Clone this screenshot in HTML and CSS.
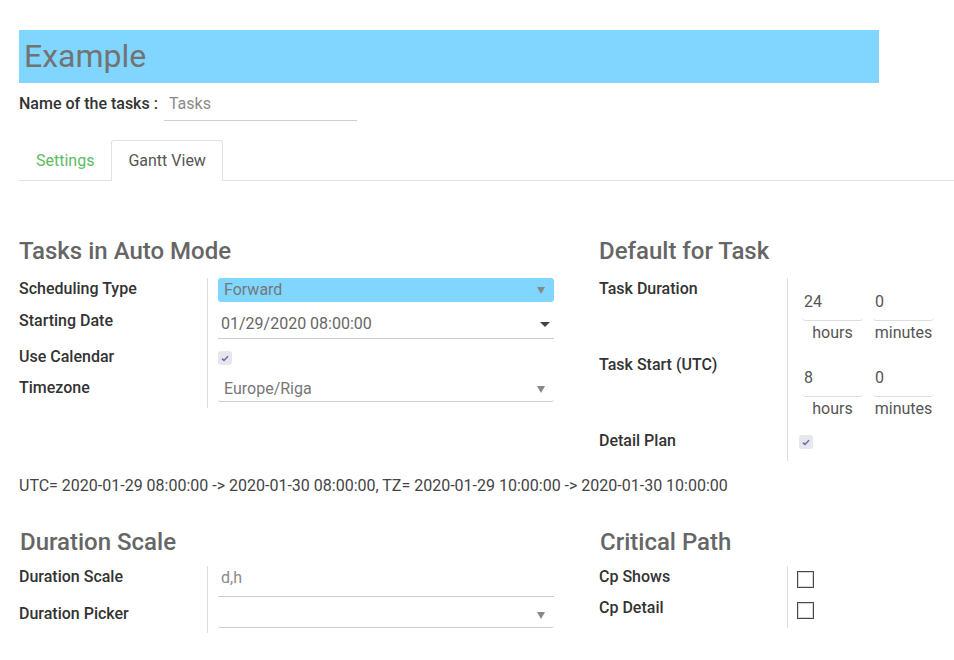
FILE: index.html
```html
<!DOCTYPE html>
<html>
<head>
<meta charset="utf-8">
<link rel="stylesheet" href="styles.css">
</head>
<body>
<div class="sheet">
  <div class="title-bar">Example</div>
  <div class="name-row">
    <span class="name-label">Name of the tasks :</span>
    <span class="name-input">Tasks</span>
  </div>
  <div class="tabs">
    <span class="tab">Settings</span>
    <span class="tab active">Gantt View</span>
  </div>

  <div class="groups g1">
    <div class="col">
      <h2>Tasks in Auto Mode</h2>
      <div class="fields">
        <div class="row r1"><div class="lbl">Scheduling Type</div><div class="val"><div class="select hl">Forward<i class="tri"></i></div></div></div>
        <div class="row r2"><div class="lbl">Starting Date</div><div class="val"><div class="date">01/29/2020 08:00:00<i class="caret"></i></div></div></div>
        <div class="row r3"><div class="lbl">Use Calendar</div><div class="val"><span class="chk on"><svg width="8" height="7" viewBox="0 0 8 7"><path d="M1 3.6 L3 5.4 L7 1.2" fill="none" stroke="#6f6aa8" stroke-width="1.5"/></svg></span></div></div>
        <div class="row r4"><div class="lbl">Timezone</div><div class="val"><div class="select line">Europe/Riga<i class="tri"></i></div></div></div>
      </div>
    </div>
    <div class="col">
      <h2>Default for Task</h2>
      <div class="fields right">
        <div class="row t1"><div class="lbl">Task Duration</div><div class="val"><div class="nums"><div class="num"><div class="box">24</div><div class="unit">hours</div></div><div class="num"><div class="box">0</div><div class="unit">minutes</div></div></div></div></div>
        <div class="row t1"><div class="lbl">Task Start (UTC)</div><div class="val"><div class="nums"><div class="num"><div class="box">8</div><div class="unit">hours</div></div><div class="num"><div class="box">0</div><div class="unit">minutes</div></div></div></div></div>
        <div class="row t3"><div class="lbl">Detail Plan</div><div class="val"><span class="chk on dp"><svg width="8" height="7" viewBox="0 0 8 7"><path d="M1 3.6 L3 5.4 L7 1.2" fill="none" stroke="#6f6aa8" stroke-width="1.5"/></svg></span></div></div>
      </div>
    </div>
  </div>

  <div class="utc">UTC= 2020-01-29 08:00:00 -&gt; 2020-01-30 08:00:00, TZ= 2020-01-29 10:00:00 -&gt; 2020-01-30 10:00:00</div>

  <div class="groups g2">
    <div class="col">
      <h2>Duration Scale</h2>
      <div class="fields">
        <div class="row d1"><div class="lbl">Duration Scale</div><div class="val"><div class="text-in">d,h</div></div></div>
        <div class="row d2"><div class="lbl">Duration Picker</div><div class="val"><div class="select line pick"><i class="tri"></i></div></div></div>
      </div>
    </div>
    <div class="col">
      <h2>Critical Path</h2>
      <div class="fields right">
        <div class="row c1"><div class="lbl">Cp Shows</div><div class="val"><span class="box-chk"></span></div></div>
        <div class="row c1"><div class="lbl">Cp Detail</div><div class="val"><span class="box-chk"></span></div></div>
      </div>
    </div>
  </div>
</div>
</body>
</html>
```

FILE: styles.css
```css
* { box-sizing: border-box; }
html, body { margin: 0; padding: 0; background: #fff; }
body {
  font-family: Roboto, "Liberation Sans", sans-serif;
  font-size: 16px;
  color: #444;
}
.sheet { padding: 30px 0 0 19px; }
.title-bar {
  width: 860px;
  height: 53px;
  background: #80d6ff;
  color: #737373;
  font-size: 32px;
  line-height: 53px;
  padding-left: 5px;
}
.name-row {
  margin-top: 10px;
  display: flex;
  align-items: flex-start;
  height: 28px;
}
.name-label { font-weight: 500; color: #333; line-height: 22px; }
.name-input {
  margin-left: 6px;
  width: 193px;
  height: 28px;
  line-height: 22px;
  padding-left: 5px;
  color: #8a8a8a;
  border-bottom: 1px solid #cfcfcf;
}
.tabs {
  margin-top: 19px;
  display: flex;
  border-bottom: 1px solid #dee2e6;
  height: 41px;
}
.tab {
  height: 41px;
  padding: 0 16px;
  line-height: 40px;
  color: #5dbb63;
  border: 1px solid transparent;
  border-bottom: none;
}
.tab.active {
  color: #555;
  border-color: #dee2e6;
  border-radius: 3px 3px 0 0;
  background: #fff;
  height: 41px;
  margin-bottom: -1px;
}
.groups {
  display: grid;
  grid-template-columns: 535px 1fr;
  column-gap: 45px;
}
.g1 { margin-top: 54px; }
.g2 { margin-top: 30px; }
h2 {
  margin: 0;
  font-size: 24px;
  font-weight: 500;
  color: #666;
  line-height: 30px;
}
.g1 h2 { margin-bottom: 12px; padding-top: 1px; }
.g2 h2 { margin-bottom: 9px; padding-left: 1px; }
.fields .row { display: flex; }
.lbl {
  width: 189px;
  flex: none;
  border-right: 1px solid #ddd;
  font-weight: 500;
  color: #333;
  line-height: 22px;
}
.val { flex: 1; padding-left: 10px; min-width: 0; }
.right .val { padding-left: 9px; }
.r1 { height: 32px; }
.r2 { height: 36px; }
.r3 { height: 31px; }
.r4 { height: 31px; }
.select {
  position: relative;
  height: 24px;
  line-height: 24px;
  padding-left: 6px;
  color: #777;
  width: 336px;
}
.select.hl { background: #80d6ff; border-radius: 3px; }
.select.line { border-bottom: 1px solid #ccc; border-radius: 0 0 3px 3px; height: 25px; }
.tri {
  position: absolute;
  right: 9px;
  top: 9px;
  width: 0; height: 0;
  border-left: 4px solid transparent;
  border-right: 4px solid transparent;
  border-top: 7px solid #888;
}
.date {
  position: relative;
  width: 336px;
  height: 29px;
  line-height: 27px;
  padding-left: 3px;
  color: #666;
  border-bottom: 1px solid #ccc;
}
.caret {
  position: absolute;
  right: 4px;
  top: 12px;
  width: 0; height: 0;
  border-left: 5px solid transparent;
  border-right: 5px solid transparent;
  border-top: 5px solid #444;
}
.chk {
  display: inline-flex;
  align-items: center;
  justify-content: center;
  width: 14px; height: 14px;
  border-radius: 3px;
  background: #e6e7ee;
  margin-top: 5px;
}
.chk.dp { margin-left: 2px; }
.t1 { height: 76px; }
.t3 { height: 31px; }
.nums { display: flex; gap: 10px; margin-left: 5px; padding-top: 10px; }
.num { width: 61px; }
.box {
  height: 33px;
  padding: 3px 0 0 2px;
  line-height: 22px;
  color: #555;
  border-bottom: 1px solid #ddd;
  border-radius: 0 0 4px 4px;
}
.unit { text-align: center; line-height: 24px; color: #555; }
.utc {
  margin-top: 14px;
  line-height: 22px;
  color: #444;
}
.d1 { height: 37px; }
.d2 { height: 30px; }
.text-in {
  width: 336px;
  height: 31px;
  line-height: 24px;
  padding-left: 3px;
  color: #8a8a8a;
  border-bottom: 1px solid #ccc;
}
.pick { margin-top: 0; }
.c1 { height: 31px; }
.box-chk {
  display: block;
  width: 17px; height: 17px;
  margin-top: 5px;
  border: 1.5px solid #4a4a4a;
  box-shadow: inset 0 0 0 1px #d5d5d5;
}
```
